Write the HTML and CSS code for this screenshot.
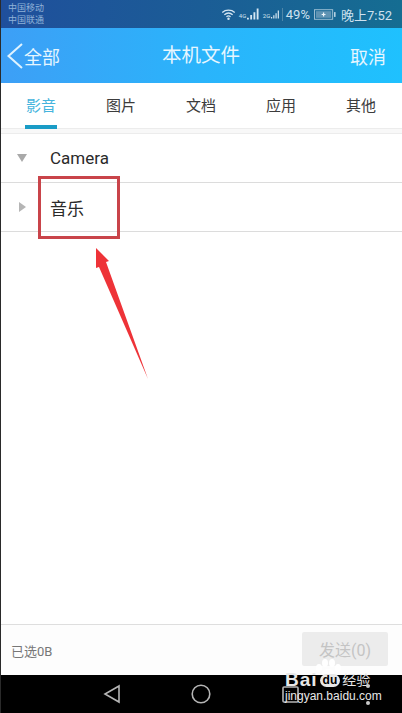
FILE: index.html
```html
<!DOCTYPE html>
<html lang="zh">
<head>
  <meta charset="UTF-8" />
  <title>本机文件</title>
  <link rel="stylesheet" href="styles.css">
</head>
<body>
  <div class="screen">
    <div class="status">
      <div class="carriers">
        <span>中国移动</span>
        <span>中国联通</span>
      </div>
      <div class="status-right">
        <svg class="wifi" width="15" height="13" viewBox="0 0 18 14">
          <path d="M1.500 4.500C5.500 1 12.500 1 16.500 4.500M4 7.200C7 4.800 11 4.800 14 7.200M6.500 9.600C8 8.500 10 8.500 11.500 9.600" fill="none" stroke="#d5e6f2" stroke-width="1.500"/>
          <circle cx="9" cy="12" r="1.500" fill="#d5e6f2"/>
        </svg>
        <span class="net">4G</span>
        <svg class="sig-one" width="12" height="12" viewBox="0 0 13 12"><path d="M0 10h2v2H0zM3.500 7h2v5h-2zM7 4h2v8H7zM10.500 0h2v12h-2z" fill="#d5e6f2"/></svg>
        <span class="net net-two">2G</span>
        <svg width="8" height="9" viewBox="0 0 10 10"><path d="M0 8h1.500v2H0zM2.800 6h1.500v4H2.800zM5.600 3.500h1.500V10H5.600zM8.400 0h1.500v10H8.400z" fill="#d5e6f2"/></svg>
        <span class="sep"></span>
        <span class="pct">49%</span>
        <svg class="batt" width="22" height="11" viewBox="0 0 23 11">
          <rect x="0.500" y="0.500" width="19" height="10" fill="none" stroke="#9fc0d4"/>
          <rect x="2" y="2" width="16" height="7" fill="#5f93b3"/>
          <path d="M8 5.500h4M10 3.500v4" stroke="#eef6fb" stroke-width="1.300"/>
          <rect x="21" y="3" width="1.500" height="5" fill="#c5dcea"/>
        </svg>
        <span class="time">晚上7:52</span>
      </div>
    </div>

    <div class="navbar">
      <div class="back">
        <svg width="16" height="26" viewBox="0 0 16 26"><path d="M15 1L1.500 13 15 25" fill="none" stroke="#dff3ff" stroke-width="2"/></svg>
        <span>全部</span>
      </div>
      <div class="title">本机文件</div>
      <div class="cancel">取消</div>
    </div>

    <div class="tabs">
      <div class="tab active">影音</div>
      <div class="tab">图片</div>
      <div class="tab">文档</div>
      <div class="tab">应用</div>
      <div class="tab">其他</div>
    </div>
    <div class="tabs-gap"></div>

    <div class="list">
      <div class="row">
        <span class="arrow-down"></span>
        <span class="row-name">Camera</span>
      </div>
      <div class="row">
        <span class="arrow-right"></span>
        <span class="row-name">音乐</span>
      </div>
    </div>

    <div class="footer">
      <span class="selected">已选0B</span>
      <button class="send">发送(0)</button>
    </div>

    <div class="sysbar">
      <svg width="18" height="20" viewBox="0 0 18 20"><path d="M16 2L2 10l14 8z" fill="none" stroke="#b5b5b5" stroke-width="1.600"/></svg>
      <svg width="20" height="20" viewBox="0 0 20 20"><circle cx="10" cy="10" r="8.800" fill="none" stroke="#b5b5b5" stroke-width="1.600"/></svg>
      <svg width="17" height="17" viewBox="0 0 17 17"><rect x="1" y="1" width="15" height="15" rx="1" fill="none" stroke="#b5b5b5" stroke-width="1.600"/></svg>
    </div>

    <!-- annotation drawn on the screenshot -->
    <div class="red-box"></div>
    <svg class="red-arrow" width="60" height="136" viewBox="0 0 60 136">
      <path d="M1 1L14 14 11 15 53 132 4 20 1 21z" fill="#ee3338"/>
    </svg>

    <svg class="paw" width="26" height="18" viewBox="0 0 26 18">
      <g fill="#fff">
        <ellipse cx="4" cy="9" rx="3" ry="4"/>
        <ellipse cx="10" cy="4" rx="3" ry="4"/>
        <ellipse cx="17" cy="4" rx="3" ry="4"/>
        <ellipse cx="23" cy="9" rx="3" ry="4"/>
        <ellipse cx="13" cy="14" rx="6" ry="4"/>
      </g>
    </svg>
    <div class="watermark">
      <div class="wm-top">
        <span class="wm-bai">Bai</span>
        <span class="wm-du">du</span>
        <span class="wm-cn">经验</span>
      </div>
      <div class="wm-url">jingyan.baidu.com</div>
    </div>
    <div class="dots"><i></i><i></i></div>
  </div>
</body>
</html>
```

FILE: styles.css
```css
* {
  box-sizing: border-box;
}

body {
  margin: 0;
  background: #000;
  font-family: Roboto, "Noto Sans CJK SC", sans-serif;
}

.screen {
  position: relative;
  width: 402px;
  height: 713px;
  display: flex;
  flex-direction: column;
  overflow: hidden;
  background: #fff;
  border-left: 1px solid #2a2a2a;
}

/* status bar */
.status {
  height: 28px;
  display: flex;
  justify-content: space-between;
  align-items: center;
  padding: 0 10px 0 7px;
  background: linear-gradient(90deg, #1f4f9c, #1b5d96 50%, #156d92);
  color: #cfe2ef;
}

.carriers {
  display: flex;
  flex-direction: column;
  font-size: 9px;
  line-height: 12px;
  color: #8fb2d8;
}

.status-right {
  display: flex;
  align-items: center;
  font-size: 13px;
}

.wifi {
  margin-right: 3px;
}

.net {
  width: 8px;
  font-size: 6px;
  line-height: 8px;
  align-self: flex-start;
  margin-top: 7px;
}

.net-two {
  margin-left: 4px;
}

.sep {
  width: 1px;
  height: 13px;
  margin: 0 3px;
  background: #4f86a8;
}

.pct {
  margin-right: 4px;
}

.batt {
  margin-right: 5px;
}

.time {
  font-size: 13px;
}

/* blue header */
.navbar {
  height: 55px;
  display: flex;
  justify-content: space-between;
  align-items: center;
  position: relative;
  padding: 0 16px 0 6px;
  background: linear-gradient(90deg, #3d9ff6, #2ab4fb 50%, #1fc1fe);
  color: #e6f6ff;
  font-size: 18px;
}

.back {
  display: flex;
  align-items: center;
  gap: 1px;
}

.title {
  position: absolute;
  left: 161px;
  top: 14px;
  line-height: 27px;
  font-size: 19.500px;
}

/* tabs */
.tabs {
  height: 46px;
  display: grid;
  grid-template-columns: repeat(5, 80px);
  border-bottom: 1px solid #ececec;
}

.tab {
  position: relative;
  text-align: center;
  line-height: 46px;
  font-size: 15px;
  color: #3c3c3c;
}

.tab.active {
  color: #45b4dd;
}

.tab.active::after {
  content: "";
  position: absolute;
  left: 24px;
  bottom: 0;
  width: 32px;
  height: 4px;
  background: #1a9cc6;
}

.tabs-gap {
  height: 5px;
  background: #f8f8f8;
  border-bottom: 1px solid #ececec;
}

/* folder list */
.list {
  flex: 1;
}

.row {
  height: 49px;
  display: flex;
  align-items: center;
  padding-left: 16px;
  border-bottom: 1px solid #dcdcdc;
}

.row-name {
  margin-left: 23px;
  font-size: 17px;
  color: #2a2a2a;
}

.arrow-down {
  width: 0;
  height: 0;
  border-left: 5px solid transparent;
  border-right: 5px solid transparent;
  border-top: 8px solid #a9a9a9;
}

.arrow-right {
  width: 0;
  height: 0;
  margin-left: 2px;
  margin-right: 1px;
  border-top: 5.500px solid transparent;
  border-bottom: 5.500px solid transparent;
  border-left: 7px solid #b5b5b5;
}

/* bottom bar */
.footer {
  height: 51px;
  display: flex;
  justify-content: space-between;
  align-items: center;
  padding: 0 14px 0 10px;
  background: #fdfdfd;
  border-top: 1px solid #dedede;
}

.selected {
  font-size: 13px;
  color: #777;
}

.send {
  width: 86px;
  height: 34px;
  margin-top: -2px;
  border: none;
  border-radius: 2px;
  background: #ececec;
  color: #c4c4c4;
  font-family: inherit;
  font-size: 16px;
}

.sysbar {
  height: 38px;
  flex-shrink: 0;
  margin-left: -1px;
  display: grid;
  grid-template-columns: 88px 91px 1fr;
  padding-left: 103px;
  align-items: center;
  background: #000;
}

/* overlays */
.red-box {
  position: absolute;
  left: 37px;
  top: 176px;
  width: 82px;
  height: 63px;
  border: 3px solid #c9444a;
}

.red-arrow {
  position: absolute;
  left: 94px;
  top: 247px;
}

.paw {
  position: absolute;
  left: 314px;
  top: 659px;
}

.watermark {
  position: absolute;
  left: 284px;
  top: 671px;
  width: 90px;
  color: #e8e8e8;
}

.wm-top {
  display: flex;
  align-items: center;
  height: 18px;
}

.wm-bai {
  font-family: "Liberation Sans", sans-serif;
  font-weight: bold;
  font-size: 19px;
  letter-spacing: 1px;
}

.wm-du {
  margin: 0 2px;
  padding: 0 3px;
  border-radius: 7px;
  background: #e8e8e8;
  color: #000;
  font-family: "Liberation Sans", sans-serif;
  font-weight: bold;
  font-size: 12px;
  line-height: 13px;
}

.wm-cn {
  font-size: 14px;
  line-height: 18px;
}

.wm-url {
  font-family: "Liberation Sans", sans-serif;
  font-size: 12px;
  line-height: 14px;
  white-space: nowrap;
}

.dots {
  position: absolute;
  left: 365px;
  top: 684px;
  display: flex;
  flex-direction: column;
  gap: 13px;
}

.dots i {
  width: 4px;
  height: 4px;
  border-radius: 50%;
  background: #c9c9c9;
}
```
